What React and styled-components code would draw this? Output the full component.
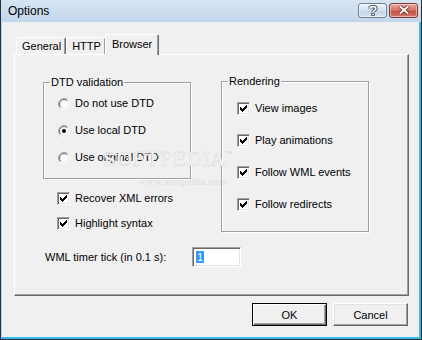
import React from "react";
import styled, { createGlobalStyle } from "styled-components";

const GlobalStyle = createGlobalStyle`
  html, body { margin: 0; padding: 0; background: #f0f0f0; }
  body {
    font-family: "Liberation Sans", Arial, sans-serif;
    font-size: 11px;
    color: #000;
  }
  * { box-sizing: border-box; }
`;

const Window = styled.div`
  width: 422px;
  height: 340px;
  display: flex;
  flex-direction: column;
  border-left: 1px solid #26323f;
  border-right: 1px solid #26323f;
  border-bottom: 1px solid #26323f;
  background: #f0f0f0;
`;

const TitleBar = styled.div`
  height: 22px;
  flex: none;
  display: flex;
  align-items: center;
  padding: 0 3px 0 7px;
  background: linear-gradient(#d6e4f2, #c2d6ec);
  font-size: 12px;
`;

const Title = styled.div`
  flex: 1;
`;

const CaptionButtons = styled.div`
  display: flex;
  gap: 2px;
  margin-top: -2px;
`;

const CaptionButton = styled.div`
  width: 29px;
  height: 15px;
  border-radius: 3px;
  display: flex;
  align-items: center;
  justify-content: center;
  border: 1px solid ${(p) => (p.$close ? "#7b3a35" : "#707f92")};
  background: ${(p) =>
    p.$close
      ? "linear-gradient(#e9a99c, #d26f62 50%, #c14a3c 51%, #d07a6a)"
      : "linear-gradient(#eef3f9, #d3e0ee 50%, #c3d4e8 51%, #d6e3f1)"};
  box-shadow: inset 0 0 0 1px rgba(255, 255, 255, 0.45);
`;

const Body = styled.div`
  flex: 1;
  display: flex;
  flex-direction: column;
  border-left: 1px solid #b7d0ea;
  border-right: 2px solid #35b9e6;
  border-bottom: 2px solid #35b9e6;
  padding: 12px 0 0 12px;
`;

const TabStrip = styled.div`
  height: 20px;
  display: flex;
  align-items: flex-end;
  padding-left: 2px;
  position: relative;
  z-index: 1;
`;

const Tab = styled.div`
  height: ${(p) => (p.$active ? "21px" : "17px")};
  margin: ${(p) => (p.$active ? "0 -2px -1px -1px" : "0")};
  padding: ${(p) => (p.$active ? "3px 6px 0 6px" : "2px 4px 0 5px")};
  background: #f0f0f0;
  border-top: 1px solid #fff;
  border-left: 1px solid #fff;
  border-right: 1px solid #696969;
  border-radius: 2px 2px 0 0;
  box-shadow: inset -1px 0 #a0a0a0;
  white-space: nowrap;
  position: relative;
  z-index: ${(p) => (p.$active ? 2 : 1)};
`;

const Panel = styled.div`
  width: 395px;
  height: 242px;
  border-top: 1px solid #fff;
  border-left: 1px solid #fff;
  border-right: 1px solid #696969;
  border-bottom: 1px solid #696969;
  box-shadow: inset -1px -1px #a0a0a0;
  display: flex;
  align-items: flex-start;
  gap: 30px;
  padding: 21px 0 0 28px;
  position: relative;
`;

const Column = styled.div`
  width: 148px;
  flex: none;
  display: flex;
  flex-direction: column;
  margin-top: ${(p) => p.$shift || 0}px;
`;

const Group = styled.fieldset`
  margin: 0;
  width: 148px;
  height: ${(p) => p.$h}px;
  border: 1px solid #a0a0a0;
  box-shadow: 1px 1px #fff, inset 1px 1px #fff;
  padding: ${(p) => p.$pad}px 0 0 0;
  display: flex;
  flex-direction: column;
  gap: ${(p) => p.$gap}px;
`;

const Legend = styled.legend`
  margin-left: 6px;
  padding: 0 1px;
  line-height: 13px;
`;

const Option = styled.div`
  height: 13px;
  display: flex;
  align-items: center;
  gap: 5px;
  line-height: 13px;
  white-space: nowrap;
  padding-left: ${(p) => p.$indent || 0}px;
  margin-top: ${(p) => p.$top || 0}px;
`;

const Box = styled.div`
  width: 13px;
  height: 13px;
  flex: none;
  background: #fff;
  border: 1px solid;
  border-color: #a0a0a0 #fff #fff #a0a0a0;
  box-shadow: inset 1px 1px #696969, inset -1px -1px #e3e3e3;
  padding: 2px;
  display: flex;
`;

const FieldRow = styled.div`
  display: flex;
  align-items: center;
  margin-top: 17px;
  padding-left: 2px;
`;

const FieldLabel = styled.div`
  width: 147px;
  flex: none;
  white-space: nowrap;
`;

const Field = styled.div`
  width: 49px;
  height: 20px;
  flex: none;
  background: #fff;
  border: 1px solid;
  border-color: #a0a0a0 #fff #fff #a0a0a0;
  box-shadow: inset 1px 1px #696969, inset -1px -1px #e3e3e3;
  padding: 3px 0 0 3px;
  line-height: 13px;
`;

const Selected = styled.span`
  background: #3399ff;
  color: #fff;
  padding: 0 1px;
`;

const ButtonRow = styled.div`
  display: flex;
  justify-content: flex-end;
  gap: 6px;
  margin-top: 7px;
  padding-right: 11px;
`;

const Button = styled.div`
  width: 75px;
  height: 23px;
  display: flex;
  align-items: center;
  justify-content: center;
  background: #f0f0f0;
  border: 1px solid;
  border-color: ${(p) =>
    p.$default ? "#000" : "#fff #696969 #696969 #fff"};
  box-shadow: ${(p) =>
    p.$default
      ? "inset 1px 1px #fff, inset -1px -1px #696969, inset -2px -2px #a0a0a0"
      : "inset -1px -1px #a0a0a0, inset 1px 1px #e3e3e3"};
`;

const Watermark = styled.div`
  position: absolute;
  left: 88px;
  top: 89px;
  pointer-events: none;
  color: #f6f6f6;
  -webkit-text-stroke: 0.5px #d9d9d9;
  font-family: "DejaVu Serif", serif;
  font-size: 19px;
  letter-spacing: 0.5px;
  line-height: 20px;
  white-space: nowrap;
`;

const Tm = styled.sup`
  font-family: "Liberation Sans", sans-serif;
  font-size: 7px;
  -webkit-text-stroke: 0;
  color: #d6d6d6;
  vertical-align: 10px;
`;

const WatermarkUrl = styled.div`
  font-family: "Liberation Serif", serif;
  font-size: 10px;
  letter-spacing: 0.5px;
  -webkit-text-stroke: 0;
  color: #dcdcdc;
  line-height: 12px;
  margin: 7px 0 0 36px;
`;

const CHECK = [
  "......#",
  ".....##",
  "#...###",
  "##.###.",
  "#####..",
  ".###...",
  "..#....",
];

const CheckMark = () => (
  <svg width="7" height="7" viewBox="0 0 7 7" shapeRendering="crispEdges">
    {CHECK.flatMap((row, y) =>
      row.split("").map((c, x) =>
        c === "#" ? <rect key={`${x}-${y}`} x={x} y={y} width="1" height="1" fill="#000" /> : null
      )
    )}
  </svg>
);

const Checkbox = ({ label, indent, top }) => (
  <Option $indent={indent} $top={top}>
    <Box>
      <CheckMark />
    </Box>
    {label}
  </Option>
);

const arc = (r, fromTopLeft) => {
  const d = r * 0.7071;
  const a = `${6 - d} ${6 + d}`;
  const b = `${6 + d} ${6 - d}`;
  return fromTopLeft ? `M${a} A${r} ${r} 0 0 1 ${b}` : `M${b} A${r} ${r} 0 0 1 ${a}`;
};

const Radio = ({ label, checked }) => (
  <Option $indent={14}>
    <svg width="12" height="12" viewBox="0 0 12 12" style={{ flex: "none" }}>
      <circle cx="6" cy="6" r="5" fill="#fff" />
      <path d={arc(5.5, true)} stroke="#a0a0a0" fill="none" />
      <path d={arc(5.5, false)} stroke="#fff" fill="none" />
      <path d={arc(4.5, true)} stroke="#696969" fill="none" />
      <path d={arc(4.5, false)} stroke="#e3e3e3" fill="none" />
      {checked && <circle cx="6" cy="6" r="2" fill="#000" />}
    </svg>
    {label}
  </Option>
);

export default function App() {
  return (
    <>
      <GlobalStyle />
      <Window>
        <TitleBar>
          <Title>Options</Title>
          <CaptionButtons>
            <CaptionButton>
              <svg width="10" height="11" viewBox="0 0 10 11">
                <path
                  d="M2 3.5 C2 1 8 1 8 3.5 C8 5.5 5 5.2 5 7.3"
                  stroke="#3d4a5c"
                  strokeWidth="3.4"
                  fill="none"
                />
                <rect x="3.3" y="8.2" width="3.4" height="2.8" fill="#3d4a5c" />
                <path
                  d="M2 3.5 C2 1 8 1 8 3.5 C8 5.5 5 5.2 5 7.3"
                  stroke="#fff"
                  strokeWidth="1.6"
                  fill="none"
                />
                <rect x="4.2" y="9" width="1.6" height="1.3" fill="#fff" />
              </svg>
            </CaptionButton>
            <CaptionButton $close>
              <svg width="12" height="10" viewBox="0 0 12 10">
                <path d="M2 1.5 L10 8.5 M10 1.5 L2 8.5" stroke="#5a1d18" strokeWidth="3.6" />
                <path d="M2 1.5 L10 8.5 M10 1.5 L2 8.5" stroke="#fff" strokeWidth="2" />
              </svg>
            </CaptionButton>
          </CaptionButtons>
        </TitleBar>
        <Body>
          <TabStrip>
            <Tab>General</Tab>
            <Tab>HTTP</Tab>
            <Tab $active>Browser</Tab>
          </TabStrip>
          <Panel>
            <Column>
              <Group $h={103} $pad={8} $gap={14}>
                <Legend>DTD validation</Legend>
                <Radio label="Do not use DTD" />
                <Radio label="Use local DTD" checked />
                <Radio label="Use original DTD" />
              </Group>
              <Checkbox label="Recover XML errors" indent={14} top={13} />
              <Checkbox label="Highlight syntax" indent={14} top={12} />
              <FieldRow>
                <FieldLabel>WML timer tick (in 0.1 s):</FieldLabel>
                <Field>
                  <Selected>1</Selected>
                </Field>
              </FieldRow>
            </Column>
            <Column $shift={-1}>
              <Group $h={157} $pad={14} $gap={19}>
                <Legend>Rendering</Legend>
                <Checkbox label="View images" indent={15} />
                <Checkbox label="Play animations" indent={15} />
                <Checkbox label="Follow WML events" indent={15} />
                <Checkbox label="Follow redirects" indent={15} />
              </Group>
            </Column>
            <Watermark>
              SOFTPEDIA<Tm>™</Tm>
              <WatermarkUrl>www.softpedia.com</WatermarkUrl>
            </Watermark>
          </Panel>
          <ButtonRow>
            <Button $default>OK</Button>
            <Button>Cancel</Button>
          </ButtonRow>
        </Body>
      </Window>
    </>
  );
}
